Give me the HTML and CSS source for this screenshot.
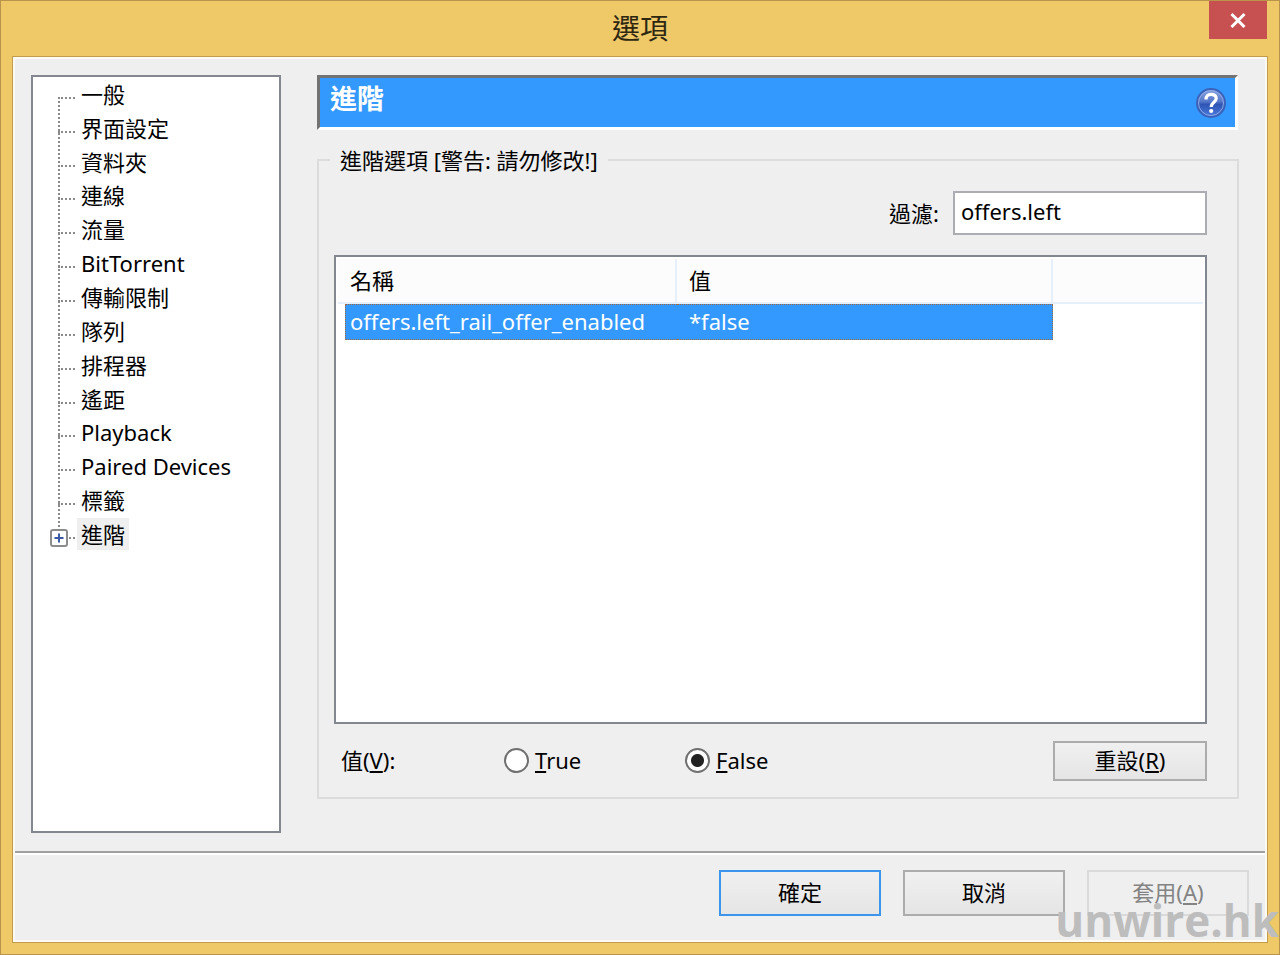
FILE: index.html
```
<!DOCTYPE html>
<html lang="zh-Hant">
<head>
  <meta charset="UTF-8">
  <title>選項</title>
  <link rel="stylesheet" href="styles.css">
</head>
<body>

  <div class="window">
    <header class="titlebar">
      <h1>選項</h1>
      <button type="button" class="close" aria-label="關閉">
        <svg width="16" height="16" viewBox="0 0 16 16"><path d="M1.5 2L14.5 15M14.5 2L1.5 15" stroke="#fff" stroke-width="3"/></svg>
      </button>
    </header>

    <form class="client">
      <div class="content">

        <!-- Category tree -->
        <nav class="tree">
          <ul>
            <li><a href="#">一般</a></li>
            <li><a href="#">界面設定</a></li>
            <li><a href="#">資料夾</a></li>
            <li><a href="#">連線</a></li>
            <li><a href="#">流量</a></li>
            <li><a href="#">BitTorrent</a></li>
            <li><a href="#">傳輸限制</a></li>
            <li><a href="#">隊列</a></li>
            <li><a href="#">排程器</a></li>
            <li><a href="#">遙距</a></li>
            <li><a href="#">Playback</a></li>
            <li><a href="#">Paired Devices</a></li>
            <li><a href="#">標籤</a></li>
            <li class="parent">
              <button type="button" class="expand" aria-label="展開">
                <svg width="18" height="18" viewBox="0 0 18 18"><rect x="1" y="1" width="16" height="16" rx="2" fill="#fff" stroke="#8c8c8c" stroke-width="2"/><path d="M4.5 9H13.5M9 4.5V13.5" stroke="#3b58a6" stroke-width="2"/></svg>
              </button>
              <a href="#" class="selected">進階</a>
            </li>
          </ul>
        </nav>

        <main class="page">
          <div class="banner">
            <h2>進階</h2>
            <button type="button" class="help" aria-label="說明">
              <svg width="30" height="30" viewBox="0 0 30 30">
                <defs>
                  <linearGradient id="ball" x1="0" y1="0" x2="0" y2="1">
                    <stop offset="0" stop-color="#8ba6e4"/>
                    <stop offset="0.45" stop-color="#5577c9"/>
                    <stop offset="0.55" stop-color="#2f55b4"/>
                    <stop offset="1" stop-color="#4a7be0"/>
                  </linearGradient>
                </defs>
                <circle cx="15" cy="15" r="14" fill="url(#ball)" stroke="#3a62ba" stroke-width="2"/>
                <circle cx="15" cy="15" r="12.5" fill="none" stroke="#8fa9e4" stroke-width="1"/>
                <path d="M10 11.4C10 7.9 12 6.4 15 6.4C18.2 6.4 20.2 8 20.2 10.6C20.2 14.4 15.2 14 15.2 19" fill="none" stroke="#fff" stroke-width="3.2"/>
                <circle cx="15.2" cy="23" r="2.1" fill="#fff"/>
              </svg>
            </button>
          </div>

          <fieldset class="group">
            <legend>進階選項 [警告: 請勿修改!]</legend>

            <div class="filter">
              <label for="filter">過濾:</label>
              <input type="text" id="filter" value="offers.left">
            </div>

            <div class="list">
              <table>
                <colgroup>
                  <col class="col-name">
                  <col class="col-value">
                  <col>
                </colgroup>
                <thead>
                  <tr><th>名稱</th><th>值</th><th></th></tr>
                </thead>
                <tbody>
                  <tr>
                    <td><div class="cell first">offers.left_rail_offer_enabled</div></td>
                    <td><div class="cell last">*false</div></td>
                    <td></td>
                  </tr>
                </tbody>
              </table>
            </div>

            <div class="value-row">
              <span class="value-label">值(<u>V</u>):</span>
              <label class="option"><input type="radio" name="value"><span><u>T</u>rue</span></label>
              <label class="option"><input type="radio" name="value" checked><span><u>F</u>alse</span></label>
              <button type="button" class="btn reset">重設(<u>R</u>)</button>
            </div>
          </fieldset>
        </main>
      </div>

      <footer class="actions">
        <button type="button" class="btn default">確定</button>
        <button type="button" class="btn">取消</button>
        <button type="button" class="btn" disabled>套用(<u>A</u>)</button>
      </footer>
    </form>

    <div class="watermark">unwire.hk</div>
  </div>

</body>
</html>
```
FILE: styles.css
```
* {
  box-sizing: border-box;
}

body {
  margin: 0;
}

body, button, input {
  font-family: 'Noto Sans', 'Noto Sans CJK TC', sans-serif;
  font-size: 22px;
  line-height: 30px;
  color: #000;
}

button {
  padding: 0;
  border: 0;
  background: none;
}

svg {
  display: block;
}

.window {
  position: relative;
  display: flex;
  flex-direction: column;
  min-height: 100vh;
  padding: 0 12px 12px;
  border: 1px solid #b8954a;
  background: #efc868;
  overflow: hidden;
}

.titlebar {
  position: relative;
  height: 56px;
  text-align: center;
}

.titlebar h1 {
  margin: 0;
  font-size: 28px;
  line-height: 54px;
  font-weight: 400;
  color: #2d2712;
}

.close {
  position: absolute;
  top: 0;
  right: 0;
  display: flex;
  align-items: center;
  justify-content: center;
  width: 58px;
  height: 38px;
  background: #c75050;
}

.client {
  flex: 1;
  display: flex;
  flex-direction: column;
  border: 2px solid #fdfbf4;
  outline: 1px solid #c09c4c;
  background: #efefef;
}

.content {
  flex: 1;
  display: flex;
  gap: 36px;
  padding: 16px 26px 18px 16px;
}

/* tree */
.tree {
  width: 250px;
  border: 2px solid #828790;
  background: #fff;
}

.tree ul {
  position: relative;
  display: grid;
  grid-auto-rows: 1fr;
  height: 474px;
  margin: 0 0 0 25px;
  padding: 0;
  list-style: none;
}

.tree ul::before {
  content: "";
  position: absolute;
  top: 20px;
  bottom: 24px;
  left: 0;
  border-left: 2px dotted #8a8a8a;
}

.tree li {
  display: flex;
  align-items: center;
}

.tree li::before {
  content: "";
  width: 17px;
  margin: 8px 2px 0 0;
  border-top: 2px dotted #8a8a8a;
}

.tree a {
  padding: 1px 4px;
  color: #000;
  text-decoration: none;
}

.tree .selected {
  background: #efefef;
}

.tree .parent {
  position: relative;
}

.expand {
  position: absolute;
  left: -8px;
  top: 12px;
}

/* right side */
.page {
  flex: 1;
  display: flex;
  flex-direction: column;
}

.banner {
  display: flex;
  justify-content: space-between;
  height: 55px;
  margin-right: 1px;
  padding: 5px 9px 0 10px;
  border: 3px solid #fff;
  border-top-color: #737373;
  border-left-color: #737373;
  background: #3399ff;
}

.banner h2 {
  margin: 0;
  font-size: 27px;
  line-height: 32px;
  font-weight: 700;
  color: #fff;
}

.help {
  align-self: flex-start;
  margin-top: 5px;
}

.group {
  flex: 1;
  display: flex;
  flex-direction: column;
  min-width: 0;
  margin: 15px 0 34px;
  padding: 16px 30px 16px 15px;
  border: 2px solid #dcdcdc;
}

.group legend {
  margin-left: -4px;
  padding: 0 10px;
}

.filter {
  display: flex;
  justify-content: flex-end;
  align-items: center;
  gap: 14px;
}

.filter input {
  width: 254px;
  height: 44px;
  padding: 0 6px 4px;
  border: 2px solid #abadb3;
  background: #fff;
}

.list {
  flex: 1;
  margin: 20px 0 17px;
  padding: 2px;
  border: 2px solid #828790;
  background: #fff;
}

.list table {
  width: 100%;
  table-layout: fixed;
  border-spacing: 0;
}

.col-name {
  width: 339px;
}

.col-value {
  width: 376px;
}

.list th {
  height: 45px;
  padding: 0 12px 2px;
  border-right: 2px solid #e5f0fb;
  border-bottom: 2px solid #e5f0fb;
  background: #fcfcfc;
  font-weight: 400;
  text-align: left;
}

.list th:last-child {
  border-right: 0;
}

.list td {
  padding: 0;
}

.cell {
  height: 36px;
  padding: 1px 12px;
  border: 1px dotted #a8683c;
  border-width: 1px 0;
  background: #3399ff;
  color: #fff;
  white-space: nowrap;
}

.cell.first {
  margin-left: 7px;
  padding-left: 4px;
  border-left-width: 1px;
}

.cell.last {
  border-right-width: 1px;
}

.value-row {
  display: flex;
  align-items: center;
}

.value-label {
  width: 170px;
  padding: 0 0 2px 7px;
}

.option {
  display: flex;
  align-items: center;
  gap: 6px;
  width: 181px;
  padding-bottom: 2px;
}

.option input {
  appearance: none;
  width: 25px;
  height: 25px;
  margin: 0;
  border: 2px solid #707070;
  border-radius: 50%;
  background: #fff;
}

.option input:checked {
  background: radial-gradient(circle, #222 6px, #fff 7px);
}

/* buttons */
.btn {
  width: 162px;
  height: 46px;
  padding-bottom: 3px;
  border: 2px solid #acacac;
  background: linear-gradient(#f0f0f0, #e5e5e5);
}

.btn.default {
  border-color: #3c94ec;
}

.btn:disabled {
  border-color: #dadada;
  background: #efefef;
  color: #838383;
}

.btn.reset {
  width: 154px;
  height: 40px;
  margin-left: auto;
}

.actions {
  display: flex;
  justify-content: flex-end;
  gap: 22px;
  padding: 17px 16px 24px;
  border-top: 2px solid #a0a0a0;
  box-shadow: inset 0 2px #fff;
}

.watermark {
  position: absolute;
  right: 0;
  bottom: 4px;
  font-family: 'Open Sans', sans-serif;
  font-size: 44px;
  line-height: 60px;
  font-weight: 700;
  color: #bdbdbd;
  pointer-events: none;
}
```
